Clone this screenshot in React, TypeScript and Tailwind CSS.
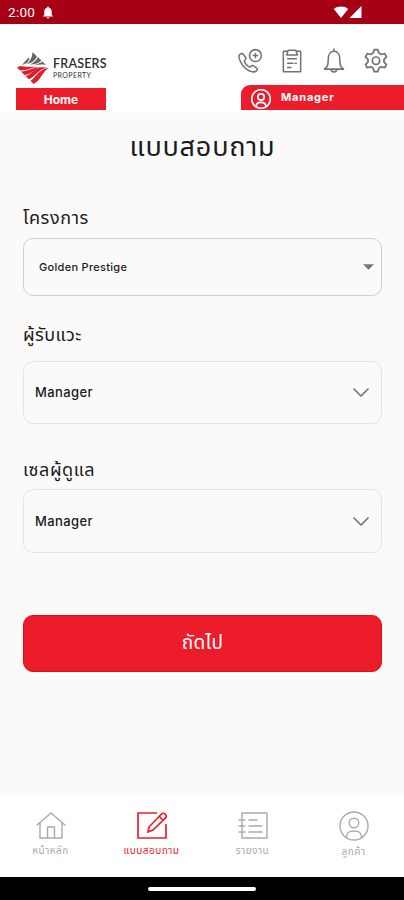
import type { ReactNode } from "react";

type IconProps = { className?: string; children: ReactNode; box?: string };

function Line({ className = "", children, box = "0 0 24 24" }: IconProps) {
  return (
    <svg viewBox={box} className={className} fill="none" stroke="currentColor" strokeWidth="1.4" strokeLinecap="round" strokeLinejoin="round">
      {children}
    </svg>
  );
}

function StatusBar() {
  return (
    <div className="flex h-6 items-center bg-[#a50014] pl-2 text-white">
      <span className="mt-0.5 w-[28px] font-['Roboto',sans-serif] text-[13.500px] leading-none tracking-[0.3px]">2:00</span>
      <svg viewBox="0 0 12 14" className="ml-[6px] h-[13px] w-3" fill="currentColor">
        <path d="M6 0.5a1 1 0 0 1 1 1v.5c2 .5 3 2 3 4v3.500l1.700 1.800H.3L2 9.500V6c0-2 1-3.500 3-4v-.5a1 1 0 0 1 1-1zM4.500 12h3a1.500 1.500 0 0 1-3 0z" />
      </svg>
      <svg viewBox="0 0 30 14" className="-mt-px ml-[279px] h-[14px] w-[30px]" fill="currentColor">
        <path d="M.8 4C5 .8 11 .8 15.200 4L8 13z" />
        <path d="M28.500 1v12h-12z" />
      </svg>
    </div>
  );
}

function Logo() {
  return (
    <div className="flex h-8 w-[92px] items-start">
      <svg viewBox="0 0 33 33" className="h-[33px] w-[33px] shrink-0">
        <g fill="#666">
          <path d="M15.500 0l4.500 4.500c-2 4-5 6.500-10 7.500 4-4 5.500-8 5.500-12z" />
          <path d="M21 5l3.500 3.500c-2.500 2.500-6 4-11.500 4 4-2 6.500-4.500 8-7.500z" />
          <path d="M25.500 9.500l3.500 3.500c-4-.8-8-.3-12 0 3.500-.8 6-1.800 8.500-3.500z" />
          <path d="M11.500 5.500l1 1.500-2.500 4-5 2z" />
        </g>
        <g fill="#dc1f2d">
          <path d="M0 15.500l3-1.500c6 1.500 11 0 17.500 1-5 0-10 3.500-17.500 3.500z" />
          <path d="M4 19.500c8-.5 12-5 21.500-4.300-8 1-11 7-18 7.800z" />
          <path d="M8.500 24c6.500-1.500 9-9 18.500-8.700l3 .4c-8.500 1-11.500 9-18 11.500z" />
          <path d="M13.500 28.700c6-3.500 8-12 18.500-12.700C25.500 19 23.500 29 16.500 32z" />
        </g>
      </svg>
      <div className="mt-[5px] ml-[3px] whitespace-nowrap text-[#303030]">
        <div className="font-['Lato',sans-serif] text-[12.500px] leading-[14px] font-semibold tracking-[0.200px]">FRASERS</div>
        <div className="font-['Lato',sans-serif] text-[7px] leading-[8px] tracking-[0.400px]">PROPERTY</div>
      </div>
    </div>
  );
}

function UserIcon({ className }: { className: string }) {
  return (
    <Line className={className} box="0 0 30 30">
      <circle cx="15" cy="15" r="14" />
      <circle cx="15" cy="12" r="4.800" />
      <path d="M7.500 26.500c0-5.500 3-6.500 7.500-6.500s7.500 1 7.500 6.500" />
    </Line>
  );
}

function Header() {
  return (
    <header className="h-[89px] bg-white">
      <div className="flex h-[61px] items-start justify-between pr-[15px] pl-[17px] pt-7">
        <Logo />
        <div className="mt-[-4px] flex gap-[16px] text-[#737373]">
          <Line className="h-[26px] w-[26px]">
            <path d="M2.600 6C1.200 7.500 1.700 10 3.500 13c2 4 5 7 9 8.500 3 1 5 .5 6-1 .5-1 .5-1.500-.3-2L15 16.300c-.8-.5-1.500-.2-2 .7-.8 1-1.500.8-2.600 0-1.500-1-2.600-2.500-3.300-4-.5-1-.3-1.500.5-2.200s.9-1.200.4-2L5.900 6c-.8-1.200-2.200-1.200-3.300 0z" />
            <circle cx="17" cy="7" r="5.500" />
            <path d="M17 5v4M15 7h4" />
          </Line>
          <Line className="h-[26px] w-[26px]">
            <path d="M7.500 3H4v19h16V3h-3.500" />
            <path d="M8.500 2h7l1.500 4.500H7z M8 10h8 M8 14h5 M8 18h3" />
            <path d="M15 14h1" />
          </Line>
          <Line className="h-[26px] w-[26px]">
            <path d="M12 1v2M5.700 17c1-2 1-4 1-7 0-4 2-7 5.300-7s5.300 3 5.300 7c0 3 0 5 1 7l2.500 2.500H3.200zM9.300 19.500c.3 3.500 5.100 3.500 5.400 0" />
          </Line>
          <Line className="h-[26px] w-[26px]">
            <path strokeWidth="1.600" d="M10.400 1.500h3.200l1 3.200 2.200 1.300 3.200-.8 1.700 2.900-2.300 2.300v2.600l2.300 2.300-1.700 2.900-3.200-.8-2.200 1.300-1 3.200h-3.200l-1-3.200-2.200-1.300-3.200.8-1.700-2.900L4.600 13v-2.600L2.300 8.100 4 5.200l3.200.8 2.200-1.300z" />
            <circle cx="12" cy="11.700" r="3.400" strokeWidth="1.600" />
          </Line>
        </div>
      </div>
      <div className="flex h-[25px] justify-between pl-4 font-['Inter',sans-serif] font-bold text-white">
        <div className="mt-[3px] flex h-[22px] w-[90px] items-center justify-center bg-[#ed1c2b] pt-px text-[12px]">Home</div>
        <div className="flex w-[163px] items-center rounded-tl-[9px] bg-[#ed1c2b] pl-[10px]">
          <UserIcon className="mt-0.5 h-5 w-5 stroke-[2.500]" />
          <span className="mb-px ml-[10px] text-[11px] tracking-[0.800px]">Manager</span>
        </div>
      </div>
    </header>
  );
}

function Chevron() {
  return (
    <svg viewBox="0 0 16 9" className="h-[9px] w-4" fill="none" stroke="#777" strokeWidth="1.700" strokeLinecap="round" strokeLinejoin="round">
      <path d="M1 1l7 7 7-7" />
    </svg>
  );
}

export default function App() {
  return (
    <div className="flex h-[900px] w-[404px] flex-col overflow-hidden bg-[#fafafa] font-['Noto_Sans_Thai','Noto_Sans',sans-serif] text-[#1b1b1b]">
      <StatusBar />
      <Header />
      <main className="flex h-[683px] flex-col pr-[22px] pl-[23px] pt-[17px]">
        <h1 className="h-9 text-center text-[27px] leading-9 tracking-[0.800px] whitespace-nowrap">แบบสอบถาม</h1>
        <label className="mt-[41px] h-6 text-[18px] leading-6 tracking-[0.600px]">โครงการ</label>
        <div className="mt-[7px] flex h-[58px] items-center justify-between rounded-[10px] border border-[#d0d0d0] pr-[7px] pl-[15px]">
          <span className="font-['Inter',sans-serif] text-[11px] font-medium tracking-[0.300px]">Golden Prestige</span>
          <svg viewBox="0 0 10 5" className="h-[6px] w-[11px]" fill="#777"><path d="M0 0h10L5 5z" /></svg>
        </div>
        <label className="mt-[28px] h-6 text-[18px] leading-6 tracking-[0.400px]">ผู้รับแวะ</label>
        <div className="mt-[13px] flex h-[63px] items-center justify-between rounded-[10px] border border-[#e4e4e4] pr-[12px] pl-[11px]">
          <span className="pt-px font-['Inter',sans-serif] text-[13px] font-medium tracking-[0.400px]">Manager</span>
          <Chevron />
        </div>
        <label className="mt-[35px] h-6 text-[18px] leading-6 tracking-[0.500px]">เซลผู้ดูแล</label>
        <div className="mt-[6px] flex h-[64px] items-center justify-between rounded-[10px] border border-[#e4e4e4] pr-[12px] pl-[11px]">
          <span className="pt-[2px] font-['Inter',sans-serif] text-[13px] font-medium tracking-[0.400px]">Manager</span>
          <Chevron />
        </div>
        <button className="mt-[62px] h-[57px] rounded-[10px] border border-[#e80b17] bg-[#ed1c2b] pt-[2px] text-[19px] tracking-[0.300px] text-white">ถัดไป</button>
      </main>
      <nav className="grid h-[81px] grid-cols-4 bg-white pt-[15px] text-[10px] leading-4 tracking-[0.500px] text-[#aaa]">
        <div className="flex flex-col items-center gap-[2px]">
          <Line className="h-[30px] w-[30px]" box="0 0 30 30"><path d="M1 14L15 2l14 12M4 12v15h22V12M11.500 27V16h7v11" /></Line>
          <span>หน้าหลัก</span>
        </div>
        <div className="flex flex-col items-center gap-[2px] text-[#ed1c2b]">
          <svg viewBox="0 0 30 30" className="h-[30px] w-[30px]" fill="none" stroke="currentColor" strokeWidth="1.700"><path d="M20 2H1v25h28V13M12 16L24 3.500q3-2.500 4.500 0t-.5 4L16 19l-5 2zM22.500 5.500l3.500 4" /></svg>
          <span>แบบสอบถาม</span>
        </div>
        <div className="flex flex-col items-center gap-[2px]">
          <Line className="h-[30px] w-[30px]" box="0 0 30 30"><path d="M4 2h25v25H4zM1 9h6M1 15h6M1 21h6M11 9h8M11 15h13M11 21h13" /></Line>
          <span>รายงาน</span>
        </div>
        <div className="flex flex-col items-center gap-[2px]">
          <UserIcon className="h-[30px] w-[30px]" />
          <span className="mt-px">ลูกค้า</span>
        </div>
      </nav>
      <footer className="flex h-[23px] items-center justify-center bg-black"><div className="h-1 w-[108px] rounded-full bg-white" /></footer>
    </div>
  );
}
